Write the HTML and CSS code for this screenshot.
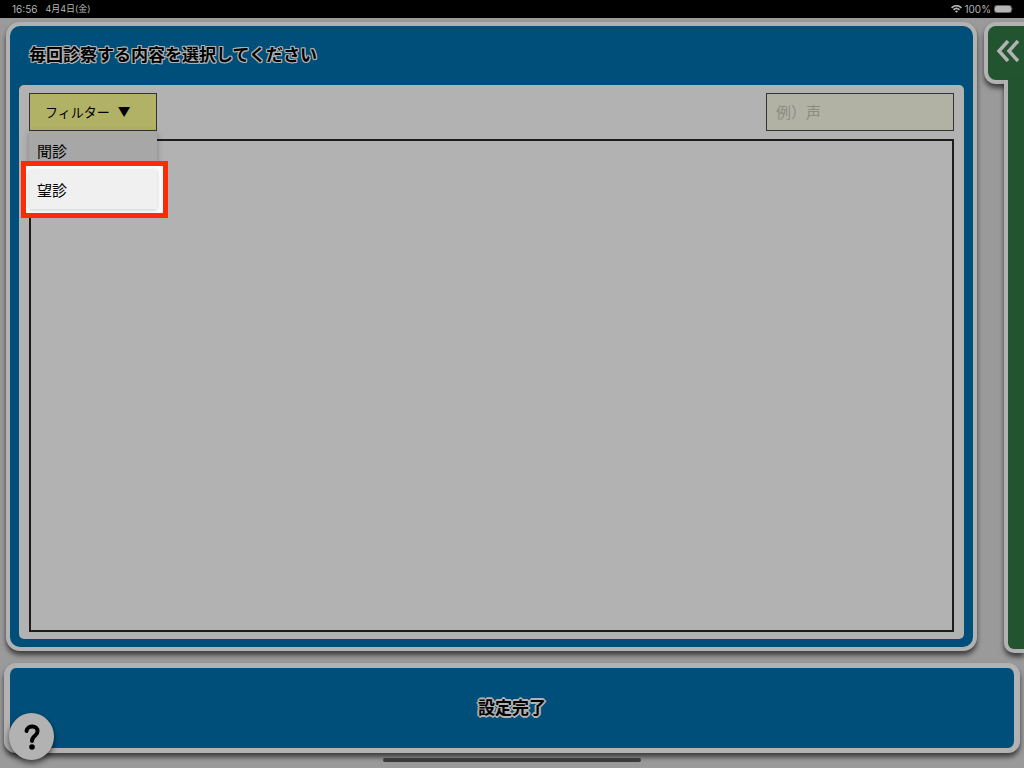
FILE: index.html
```html
<!DOCTYPE html>
<html lang="ja">
  <head>
    <meta charset="utf-8">
    <title>診察内容の選択</title>
    <link rel="stylesheet" href="styles.css">
  </head>
  <body>
    <header class="status">
      <span>16:56</span>
      <span class="date">4月4日(金)</span>
      <svg class="wifi" viewBox="0 0 20 14" width="11" height="8">
        <path d="M1 5 Q10 -3 19 5" />
        <path d="M4.500 8.500 Q10 3.500 15.500 8.500" />
        <path class="dot" d="M7 11 Q10 8.500 13 11 L10 14 Z" />
      </svg>
      <span>100%</span>
      <svg class="battery" viewBox="0 0 20 8" width="20" height="8">
        <rect x="0.500" y="0.500" width="17" height="7" rx="2" />
        <rect class="level" x="1" y="1" width="16" height="6" rx="1.500" />
        <path class="cap" d="M18.500 3 Q20 4 18.500 5 Z" />
      </svg>
    </header>

    <div class="screen">
      <main class="panel">
        <h1>毎回診察する内容を選択してください</h1>
        <div class="content">
          <div class="tools">
            <div class="filter">
              <button class="filter-button" type="button">フィルター <span>▼</span></button>
              <div class="menu">
                <button class="item" type="button">聞診</button>
                <button class="item active" type="button">望診</button>
                <div class="marker"></div>
              </div>
            </div>
            <input class="search" type="text" aria-label="検索" placeholder="例）声">
          </div>
          <div class="list"></div>
        </div>
      </main>

      <aside class="side">
        <button class="tab" type="button" aria-label="開く">
          <svg viewBox="0 0 24 22" width="24" height="22">
            <path d="M12 1 L3 11 L12 21 M22 1 L13 11 L22 21" />
          </svg>
        </button>
        <div class="strip"></div>
      </aside>
    </div>

    <footer class="bottom">
      <button class="done" type="button">設定完了</button>
      <button class="help" type="button" aria-label="ヘルプ">
        <svg viewBox="0 0 16 26" width="16" height="26">
          <path d="M2.500 7 C3 1 14 1 13.500 7.500 C13.500 12 8 11.500 8 17" />
          <circle cx="8" cy="23" r="2.800" />
        </svg>
      </button>
      <div class="home"></div>
    </footer>
  </body>
</html>
```

FILE: styles.css
```css
* {
  box-sizing: border-box;
}
body {
  display: flex;
  flex-direction: column;
  height: 100vh;
  margin: 0;
  overflow: hidden;
  background: #9a9a9a;
  color: #000;
  font-family: Inter, "Noto Sans CJK JP", sans-serif;
}
button,
input {
  margin: 0;
  font-family: inherit;
  color: inherit;
}

/* status bar */
.status {
  display: flex;
  align-items: center;
  height: 18px;
  padding: 0 10px 0 12px;
  background: #000;
  color: #b5b5b5;
  font-size: 10px;
  line-height: 18px;
}
.date {
  margin-left: 8px;
  font-size: 9px;
}
.wifi {
  margin-left: auto;
  margin-right: 2px;
  fill: none;
  stroke: #b5b5b5;
  stroke-width: 3;
}
.wifi .dot {
  fill: #b5b5b5;
  stroke: none;
}
.battery {
  margin-left: 3px;
  fill: none;
  stroke: #666;
}
.battery .level {
  fill: #b5b5b5;
  stroke: none;
}
.battery .cap {
  fill: #666;
  stroke: none;
}

.screen {
  display: flex;
  flex: 1;
  padding: 4px 0 0 6px;
}

/* main panel */
.panel {
  display: flex;
  flex: 1;
  flex-direction: column;
  margin-bottom: 12px;
  padding: 0 9px 8px;
  border: 4px solid #b2b2b2;
  border-radius: 14px;
  background: #004f7a;
  box-shadow: 0 4px 5px rgba(0, 0, 0, 0.6);
}
h1 {
  margin: 0;
  padding: 0 10px;
  font-size: 17px;
  font-weight: bold;
  line-height: 59px;
  text-shadow: 1px 0 0 #b2b2b2, -1px 0 0 #b2b2b2, 0 1px 0 #b2b2b2,
    0 -1px 0 #b2b2b2, 1px 1px 0 #b2b2b2, -1px -1px 0 #b2b2b2,
    1px -1px 0 #b2b2b2, -1px 1px 0 #b2b2b2;
}
.content {
  display: flex;
  flex: 1;
  flex-direction: column;
  gap: 8px;
  padding: 8px 10px 7px;
  border-radius: 5px;
  background: #b2b2b2;
}
.tools {
  display: flex;
  justify-content: space-between;
}
.filter {
  position: relative;
  width: 128px;
}
.filter-button {
  width: 100%;
  height: 38px;
  padding: 0 15px 2px;
  border: 1px solid #333;
  background: #b2b266;
  font-size: 13px;
  text-align: left;
}
.filter-button span {
  margin-left: 4px;
}
.search {
  width: 188px;
  height: 38px;
  padding: 0 9px;
  border: 1px solid #333;
  border-radius: 0;
  background: #b2b2a4;
  font-size: 15px;
}
.search::placeholder {
  color: #8b8b82;
}
.list {
  flex: 1;
  border: 2px solid #1c1c1c;
}

/* filter menu */
.menu {
  position: absolute;
  top: 38px;
  left: 0;
  width: 100%;
  box-shadow: 0 2px 6px rgba(0, 0, 0, 0.3);
}
.item {
  display: block;
  width: 100%;
  height: 39px;
  padding: 0 8px;
  border: none;
  background: #a7a7a7;
  font-size: 15px;
  text-align: left;
}
.active {
  position: relative;
  z-index: 1;
  background: #f0f0f0;
  box-shadow: 0 1px 4px rgba(0, 0, 0, 0.2);
}
.marker {
  position: absolute;
  top: 30px;
  right: -11px;
  bottom: -9px;
  left: -8px;
  border: 5px solid #ff2b06;
  background: #fcfcfc;
}

/* green drawer on the right */
.side {
  display: flex;
  flex-direction: column;
  width: 40px;
  margin-left: 7px;
  margin-bottom: 10px;
}
.tab {
  height: 62px;
  padding: 0 0 4px 8px;
  border: 4px solid #b2b2b2;
  border-right: none;
  border-radius: 12px 0 0 12px;
  background: #235430;
  box-shadow: 0 4px 5px rgba(0, 0, 0, 0.6);
  text-align: left;
}
.tab svg {
  display: block;
  fill: none;
  stroke: #b2b2b2;
  stroke-width: 3.5;
}
.strip {
  flex: 1;
  margin-top: -4px;
  margin-left: 20px;
  border: 4px solid #b2b2b2;
  border-top: none;
  border-right: none;
  border-radius: 0 0 0 10px;
  background: #235430;
  box-shadow: 0 4px 5px rgba(0, 0, 0, 0.6);
}

/* bottom area */
.bottom {
  position: relative;
  padding: 0 4px 6px;
}
.done {
  display: block;
  width: 100%;
  height: 90px;
  padding: 0 0 3px;
  border: solid #b2b2b2;
  border-width: 5px 6px;
  border-radius: 12px;
  background: #004f7a;
  box-shadow: 0 4px 5px rgba(0, 0, 0, 0.6);
  font-size: 17px;
  font-weight: bold;
  text-shadow: 2px 0 0 #b2b2b2, -2px 0 0 #b2b2b2, 0 2px 0 #b2b2b2,
    0 -2px 0 #b2b2b2, 1px 1px 0 #b2b2b2, -1px -1px 0 #b2b2b2,
    1px -1px 0 #b2b2b2, -1px 1px 0 #b2b2b2;
}
.help {
  position: absolute;
  left: 9px;
  bottom: 8px;
  display: flex;
  align-items: center;
  justify-content: center;
  width: 45px;
  height: 47px;
  padding: 0;
  border: none;
  border-radius: 50%;
  background: #b2b2b2;
  box-shadow: 0 3px 6px rgba(0, 0, 0, 0.6);
}
.help svg {
  fill: none;
  stroke: #000;
  stroke-width: 4;
  stroke-linecap: round;
}
.help circle {
  fill: #000;
  stroke: none;
}
.home {
  position: relative;
  width: 258px;
  height: 4px;
  margin: 5px auto 0;
  border-radius: 2px;
  background: #3a3a3a;
}
```
